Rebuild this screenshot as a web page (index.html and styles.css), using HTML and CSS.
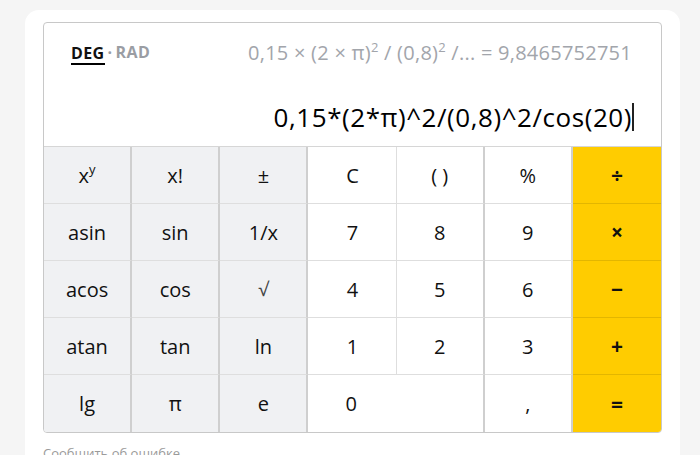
FILE: index.html
```html
<!DOCTYPE html>
<html lang="ru">
<head>
<meta charset="utf-8">
<link rel="stylesheet" href="styles.css">
</head>
<body>
<div class="card">
  <div class="calc">
    <div class="screen">
      <div class="top-row">
        <div class="modes"><span class="mode active">DEG</span><span class="dot">·</span><span class="mode">RAD</span></div>
        <div class="history">0,15 × (2 × π)<sup>2</sup> / (0,8)<sup>2</sup> /... = 9,8465752751</div>
      </div>
      <div class="input"><span>0,15*(2*π)^2/(0,8)^2/cos(20)</span><span class="caret"></span></div>
    </div>
    <div class="keys">
      <div class="key fn"><span>x<sup>y</sup></span></div>
      <div class="key fn"><span>x!</span></div>
      <div class="key fn"><span>±</span></div>
      <div class="key thin"><span>C</span></div>
      <div class="key"><span>( )</span></div>
      <div class="key"><span>%</span></div>
      <div class="key op"><span>÷</span></div>

      <div class="key fn"><span>asin</span></div>
      <div class="key fn"><span>sin</span></div>
      <div class="key fn"><span>1/x</span></div>
      <div class="key thin"><span>7</span></div>
      <div class="key"><span>8</span></div>
      <div class="key"><span>9</span></div>
      <div class="key op"><span>×</span></div>

      <div class="key fn"><span>acos</span></div>
      <div class="key fn"><span>cos</span></div>
      <div class="key fn"><span class="root">√</span></div>
      <div class="key thin"><span>4</span></div>
      <div class="key"><span>5</span></div>
      <div class="key"><span>6</span></div>
      <div class="key op"><span>−</span></div>

      <div class="key fn"><span>atan</span></div>
      <div class="key fn"><span>tan</span></div>
      <div class="key fn"><span>ln</span></div>
      <div class="key thin"><span>1</span></div>
      <div class="key"><span>2</span></div>
      <div class="key"><span>3</span></div>
      <div class="key op"><span>+</span></div>

      <div class="key fn last"><span>lg</span></div>
      <div class="key fn last"><span>π</span></div>
      <div class="key fn last"><span>e</span></div>
      <div class="key last zero"><span>0</span></div>
      <div class="key last"><span>,</span></div>
      <div class="key op last"><span>=</span></div>
    </div>
  </div>
  <div class="report">Сообщить об ошибке</div>
</div>
</body>
</html>
```

FILE: styles.css
```css
* { box-sizing: border-box; }
body {
  margin: 0;
  background: #f5f5f5;
  font-family: "Open Sans", "Noto Sans", sans-serif;
  color: #000;
}
.card {
  margin: 10px 0 0 25px;
  width: 655px;
  height: 460px;
  background: #fff;
  border-radius: 14px;
  padding: 12px 18px 0 18px;
}
.calc {
  width: 619px;
  border: 1px solid #c8c8c8;
  border-radius: 4px;
  overflow: hidden;
}
.screen {
  height: 124px;
  padding: 18px 29px 0 27px;
  border-bottom: 1px solid #d6d6d6;
}
.top-row {
  display: flex;
  justify-content: space-between;
  align-items: center;
  height: 22px;
}
.modes {
  font-size: 16px;
  font-weight: 700;
  display: flex;
  align-items: center;
  height: 22px;
  letter-spacing: 0.4px;
}
.mode { color: #9a9da3; }
.mode.active {
  color: #111;
  border-bottom: 2px solid #000;
  line-height: 20px;
  padding-top: 2px;
  margin-top: 2px;
}
.dot { color: #9a9da3; margin: 0 3px; }
.history {
  font-size: 20px;
  color: #a2a5ab;
  white-space: nowrap;
  letter-spacing: 0.25px;
}
.history sup {
  font-size: 13px;
  line-height: 0;
  vertical-align: 8px;
}
.input {
  margin-top: 37px;
  font-size: 26px;
  line-height: 34px;
  white-space: nowrap;
  letter-spacing: 0.55px;
  margin-right: -2px;
  display: flex;
  justify-content: flex-end;
  align-items: center;
}
.caret {
  display: inline-block;
  width: 2px;
  height: 28px;
  background: #222;
}
.keys {
  display: grid;
  grid-template-columns: repeat(7, 1fr);
  grid-auto-rows: 57px;
}
.key {
  display: flex;
  align-items: center;
  justify-content: center;
  font-size: 20px;
  background: #fff;
  color: #111;
  border-right: 2px solid #cfcfcf;
  border-bottom: 1px solid #dedede;
}
.key.thin {
  border-right: 1px solid #dedede;
  padding-left: 1px;
}
.key.fn { background: #f0f1f3; }
.key.op {
  background: #ffcc00;
  border-right: none;
  border-bottom-color: #e3b600;
  font-weight: 700;
  font-size: 21px;
}
.key.last { border-bottom: none; }
.key.zero {
  grid-column: span 2;
  justify-content: flex-start;
  padding-left: 37px;
}
.key sup {
  font-size: 13px;
  line-height: 0;
  vertical-align: 9px;
}
.root { color: #444; font-size: 19px; }
.report {
  margin-top: 11px;
  font-size: 13px;
  color: #9a9a9a;
}
```
